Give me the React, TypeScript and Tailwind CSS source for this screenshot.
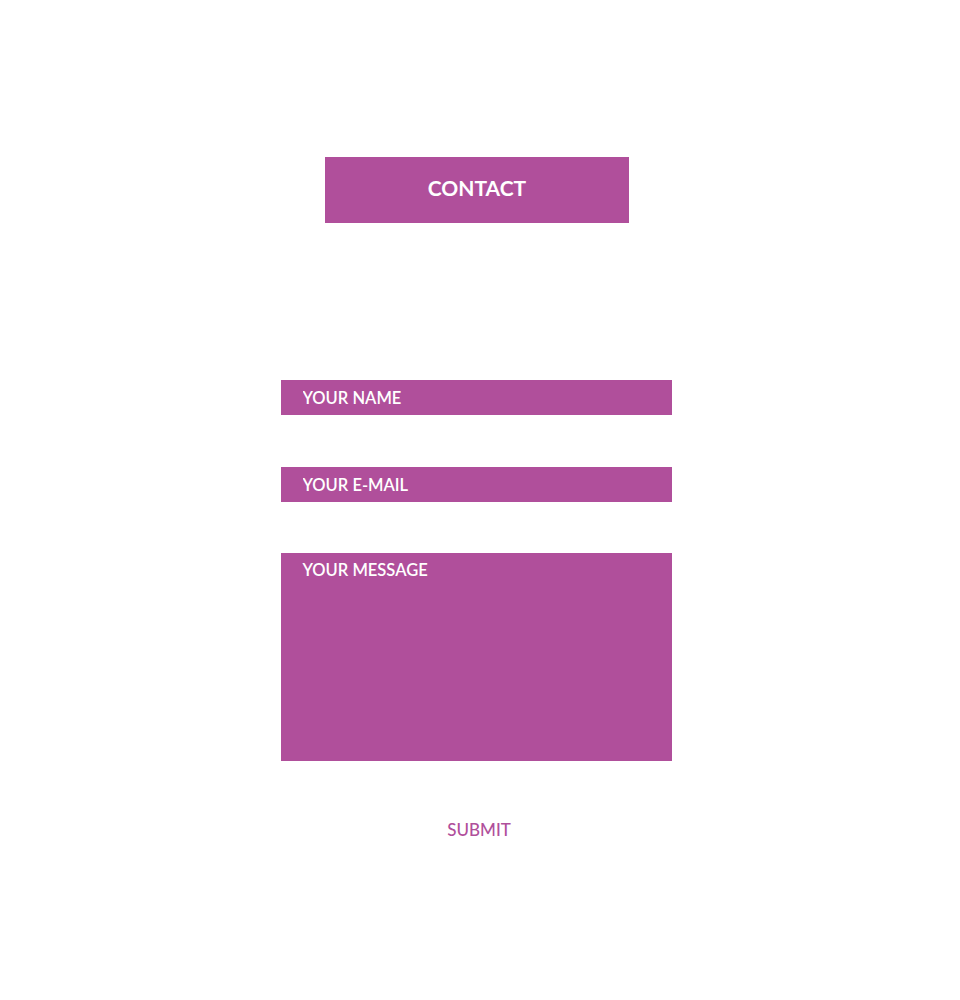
import React from 'react';

const field =
  'w-full bg-[#b04f9b] text-white uppercase outline-none px-[22px] placeholder:text-white text-[16.5px] font-semibold';

export default function App() {
  return (
    <div className="min-h-[1000px] bg-white font-['Lato',sans-serif]">
      <div className="flex flex-col items-center pt-[157px] pr-[8px]">
        <h1 className="w-[304px] h-[66px] ml-[2px] pb-[5px] bg-[#b04f9b] text-white font-bold text-[21px] flex items-center justify-center">
          CONTACT
        </h1>
        <form className="w-[391px] mt-[157px] flex flex-col" onSubmit={(e) => e.preventDefault()}>
          <input className={`${field} h-[35px]`} placeholder="YOUR NAME" />
          <input className={`${field} h-[35px] mt-[52px]`} placeholder="YOUR E-MAIL" />
          <textarea className={`${field} h-[208px] mt-[51px] pt-[5px] resize-none`} placeholder="YOUR MESSAGE" />
          <button type="submit" className="mt-[56px] ml-[6px] self-center text-[#b04f9b] text-[17px] font-medium uppercase">
            Submit
          </button>
        </form>
      </div>
    </div>
  );
}
